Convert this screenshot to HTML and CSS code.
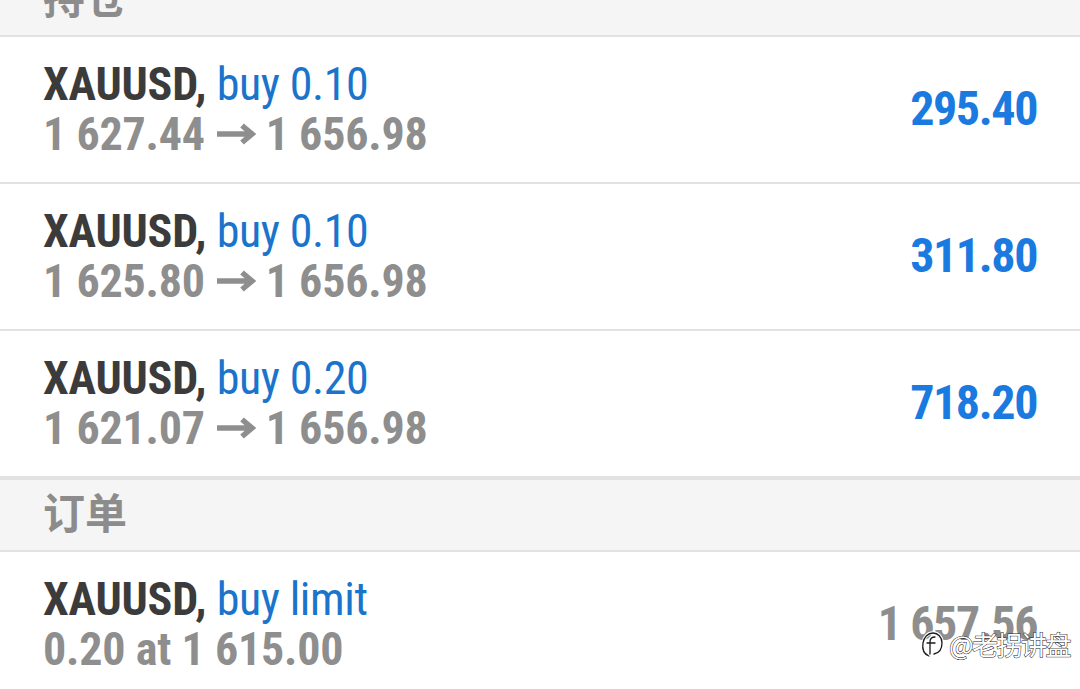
FILE: index.html
```html
<!DOCTYPE html>
<html lang="zh">
<head>
<meta charset="utf-8">
<link rel="stylesheet" href="styles.css">
</head>
<body>
<div class="screen">
  <div class="section first"><span class="section-title">持仓</span></div>
  <div class="row">
    <div class="info">
      <div class="line1"><span class="sym">XAUUSD,</span> <span class="op">buy 0.10</span></div>
      <div class="line2">1 627.44 <svg class="arrow" width="42" height="24" viewBox="0 0 42 24"><path d="M2 12H37M27 3.5L37 12L27 20.5" fill="none" stroke="#8e8e8e" stroke-width="5.5"/></svg> 1 656.98</div>
    </div>
    <div class="value profit">295.40</div>
  </div>
  <div class="row">
    <div class="info">
      <div class="line1"><span class="sym">XAUUSD,</span> <span class="op">buy 0.10</span></div>
      <div class="line2">1 625.80 <svg class="arrow" width="42" height="24" viewBox="0 0 42 24"><path d="M2 12H37M27 3.5L37 12L27 20.5" fill="none" stroke="#8e8e8e" stroke-width="5.5"/></svg> 1 656.98</div>
    </div>
    <div class="value profit">311.80</div>
  </div>
  <div class="row">
    <div class="info">
      <div class="line1"><span class="sym">XAUUSD,</span> <span class="op">buy 0.20</span></div>
      <div class="line2">1 621.07 <svg class="arrow" width="42" height="24" viewBox="0 0 42 24"><path d="M2 12H37M27 3.5L37 12L27 20.5" fill="none" stroke="#8e8e8e" stroke-width="5.5"/></svg> 1 656.98</div>
    </div>
    <div class="value profit">718.20</div>
  </div>
  <div class="section"><span class="section-title">订单</span></div>
  <div class="row">
    <div class="info">
      <div class="line1"><span class="sym">XAUUSD,</span> <span class="op">buy limit</span></div>
      <div class="line2">0.20 at 1 615.00</div>
    </div>
    <div class="value price">1 657.56</div>
  </div>
  <div class="watermark">
    <svg class="wm-logo" width="24" height="28" viewBox="0 0 24 28"><g fill="none" stroke-linecap="round"><path d="M9 26C4 24 2 19 3 13C4 7 8 3 13 3C18 3 22 7 22 13C22 19 19 23 14 24" stroke="#fff" stroke-width="3.4"/><path d="M9 26C4 24 2 19 3 13C4 7 8 3 13 3C18 3 22 7 22 13C22 19 19 23 14 24" stroke="#1a1a1a" stroke-width="1.3"/><path d="M15 7C11 7 10 9 10 12V24M7 13H15" stroke="#fff" stroke-width="3.4"/><path d="M15 7C11 7 10 9 10 12V24M7 13H15" stroke="#1a1a1a" stroke-width="1.3"/></g></svg>
    <span class="wm-text">@老拐讲盘</span>
  </div>
</div>
</body>
</html>
```
FILE: styles.css
```css
html, body {
  margin: 0;
  padding: 0;
  background: #ffffff;
}
.screen {
  position: relative;
  width: 1080px;
  height: 689px;
  overflow: hidden;
  font-family: "Roboto Condensed", Roboto, "Noto Sans CJK SC", sans-serif;
}
.section {
  height: 74px;
  box-sizing: border-box;
  background: #f5f5f5;
  border-top: 2px solid #e2e2e2;
  border-bottom: 2px solid #e2e2e2;
  display: flex;
  align-items: center;
  padding: 0 43px 8px;
}
.section.first {
  margin-top: -35px;
  border-top: none;
  height: 72px;
}
.section-title {
  font-family: "Noto Sans CJK SC", sans-serif;
  font-weight: 700;
  font-size: 42px;
  line-height: 1;
  color: #8c8c8c;
}
.row {
  height: 147px;
  box-sizing: border-box;
  padding: 22px 43px 23px;
  border-bottom: 2px solid #e2e2e2;
  display: flex;
  align-items: center;
  justify-content: space-between;
  background: #ffffff;
}
.row:last-of-type {
  border-bottom: none;
}
.info {
  font-size: 46px;
  line-height: 50px;
  white-space: nowrap;
  letter-spacing: -0.2px;
}
.sym {
  font-weight: 700;
  color: #3b3b3b;
}
.op {
  font-weight: 400;
  color: #1a74cc;
  letter-spacing: -0.4px;
}
.line2 {
  font-weight: 700;
  color: #8e8e8e;
}
.arrow {
  vertical-align: 4px;
  margin: 0 -2px 0 0;
}
.value {
  font-size: 48px;
  font-weight: 700;
  line-height: 50px;
  white-space: nowrap;
  letter-spacing: -1.4px;
}
.profit {
  color: #1a7ae0;
}
.price {
  color: #8e8e8e;
}
.watermark {
  position: absolute;
  right: 10px;
  top: 628px;
  display: flex;
  align-items: center;
  gap: 5px;
}
.wm-text {
  font-family: "Noto Sans CJK SC", sans-serif;
  font-size: 26px;
  font-weight: 400;
  line-height: 32px;
  color: #ffffff;
  -webkit-text-stroke: 1px #1a1a1a;
  paint-order: stroke fill;
  letter-spacing: -1.5px;
}
```
